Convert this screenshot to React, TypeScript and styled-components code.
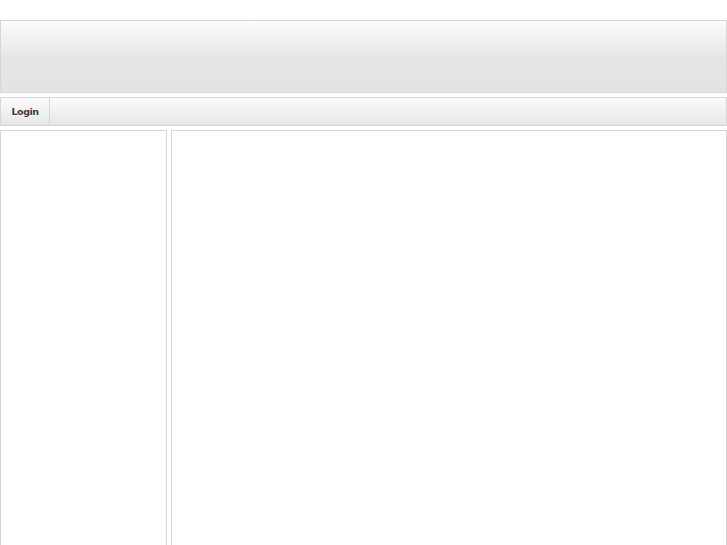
import * as React from 'react';
import styled, { createGlobalStyle } from 'styled-components';

const borderGrey = '#d6d6d6';

const App = () => {
	return (
		<>
			<GlobalStyle />
			<Page>
				<Header />
				<NavBar>
					<NavButton>Login</NavButton>
				</NavBar>
				<Body>
					<Sidebar />
					<Content />
				</Body>
			</Page>
		</>
	);
};

const GlobalStyle = createGlobalStyle`
	html, body {
		margin: 0;
		padding: 0;
		background: #ffffff;
		overflow: hidden;
	}
	body {
		font-family: "DejaVu Sans", "Liberation Sans", sans-serif;
	}
`;

const Page = styled.div`
	width: 727px;
	height: 545px;
	padding-top: 20px;
	box-sizing: border-box;
	display: flex;
	flex-direction: column;
	gap: 4px;
`;

const Header = styled.div`
	height: 73px;
	box-sizing: border-box;
	border: 1px solid ${borderGrey};
	background: linear-gradient(180deg, #fbfbfb 0%, #e5e5e5 55%, #e3e3e3 100%);
`;

const NavBar = styled.div`
	height: 29px;
	box-sizing: border-box;
	border: 1px solid ${borderGrey};
	background: linear-gradient(180deg, #fbfbfb 0%, #e6e6e6 100%);
	display: flex;
`;

const NavButton = styled.div`
	width: 49px;
	box-sizing: border-box;
	border-right: 1px solid ${borderGrey};
	display: flex;
	align-items: center;
	justify-content: center;
	font-size: 9.5px;
	font-weight: bold;
	letter-spacing: -0.5px;
	color: #3a3a3a;
	text-shadow: 0 1px 0 #ffffff;
`;

const Body = styled.div`
	flex: 1;
	display: flex;
	gap: 4px;
	min-height: 0;
`;

const Sidebar = styled.div`
	width: 167px;
	box-sizing: border-box;
	border: 1px solid ${borderGrey};
	border-bottom: none;
	height: 430px;
`;

const Content = styled.div`
	flex: 1;
	box-sizing: border-box;
	border: 1px solid ${borderGrey};
	border-bottom: none;
	height: 430px;
`;

export default App;
